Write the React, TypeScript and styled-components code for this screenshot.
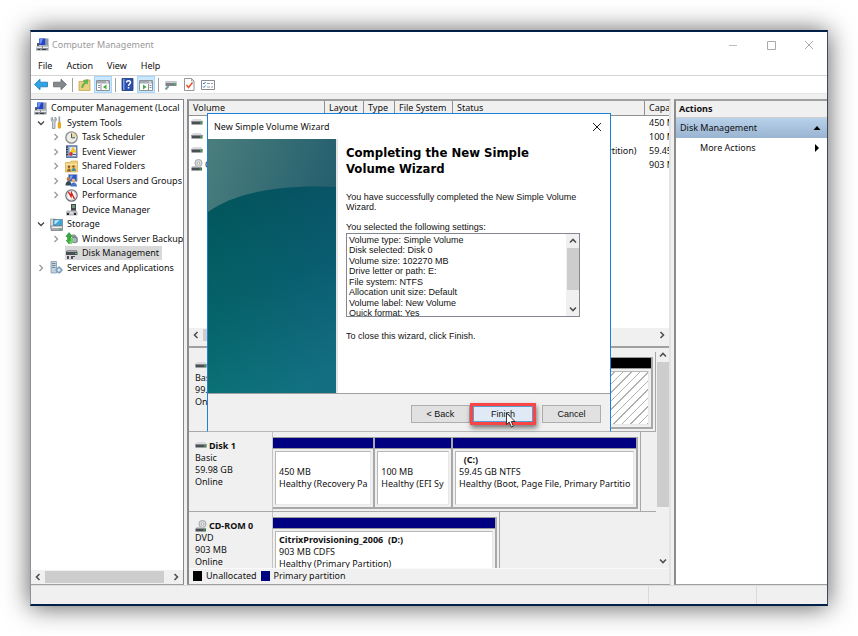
import React from 'react';
import styled, { createGlobalStyle } from 'styled-components';

const ui = '"Noto Sans", "Open Sans", sans-serif';
const classic = '"Liberation Sans", Arial, sans-serif';
const navy = '#000080';

const Global = createGlobalStyle`
  *, *::before, *::after { box-sizing: border-box; }
  body { margin: 0; background: #fff; color: #111; font: 9px/12px ${ui}; }
  button { font: inherit; color: inherit; padding: 0; border: 0; background: none; border-radius: 0; }
  ul { list-style: none; margin: 0; padding: 0; }
  h1, h2, h3, p { margin: 0; font-size: inherit; font-weight: inherit; }
  svg { display: block; flex: none; }
`;

const Page = styled.div`
  min-height: 100vh;
  padding: 30px;
  display: flex;
`;
const Window = styled.div`
  position: relative;
  flex: 1;
  min-width: 0;
  display: flex;
  flex-direction: column;
  background: #f0f0f0;
  border: solid #00204a;
  border-width: 2px 1px 2px 1px;
  border-left-color: #8a929c;
  border-right-color: #3d4a5c;
  box-shadow: 0 1px 24px rgba(0, 0, 0, 0.65);
`;
const TitleBar = styled.header`
  height: 25px;
  display: flex;
  align-items: center;
  gap: 3px;
  padding: 0 1px 0 5px;
  background: #fff;
  color: #999;
`;
const TitleText = styled.h1`flex: 1;`;
const CaptionButton = styled.button`
  width: 35px;
  height: 24px;
  display: grid;
  place-items: center;
`;
const MenuBar = styled.nav`
  height: 18px;
  display: flex;
  align-items: center;
  gap: 14px;
  padding: 0 7px;
  background: #fff;
`;
const Toolbar = styled.div`
  height: 19px;
  display: flex;
  align-items: center;
  gap: 1px;
  padding: 0 1px;
  background: #fff;
  border-top: 1px solid #d4d4d4;
  border-bottom: 1px solid #e6e6e6;
`;
const ToolButton = styled.button<{ $on?: boolean }>`
  width: 18px;
  height: 17px;
  display: grid;
  place-items: center;
  background: ${p => (p.$on ? '#cce8ff' : 'transparent')};
  border: 1px solid ${p => (p.$on ? '#a6d6fb' : 'transparent')};
`;
const ToolRule = styled.span`
  width: 4px;
  height: 14px;
  background: linear-gradient(#a0a0a0, #a0a0a0) center / 1px 100% no-repeat;
`;
const Main = styled.main`
  flex: 1;
  min-height: 0;
  display: grid;
  grid-template-columns: 153px minmax(0, 1fr) 153px;
  gap: 3px;
  padding-top: 5px;
`;
const Pane = styled.section`
  min-width: 0;
  display: flex;
  flex-direction: column;
  background: #fff;
  border-top: 2px solid #a0a0a0;
  border-bottom: 1px solid #a0a0a0;
`;
const TreePane = styled(Pane)`
  border-top: 1px solid #828790;
  border-right: 1px solid #828790;
`;
const MiddlePane = styled(Pane)`
  border-left: 2px solid #8c8c8c;
  border-right: 2px solid #e3e3e3;
`;
const ActionsPane = styled(Pane)`border-left: 2px solid #8c8c8c;`;

const Tree = styled.div`
  flex: 1;
  padding-top: 1px;
  overflow: hidden;
`;
const TreeGroup = styled.ul`
  display: flex;
  flex-direction: column;
  justify-content: space-between;
  height: 174px;
`;
const TreeRow = styled.li<{ $level: number }>`
  height: 14px;
  display: flex;
  align-items: center;
  padding-left: ${p => [3, 4, 19][p.$level]}px;
  white-space: nowrap;
`;
const Twisty = styled.span`
  flex: none;
  width: 15px;
  display: flex;
  justify-content: center;
  padding-right: 4px;
`;
const TreeLabel = styled.span<{ $selected?: boolean }>`
  flex: none;
  height: 14px;
  display: flex;
  align-items: center;
  gap: 4px;
  padding-right: 3px;
  background: ${p => (p.$selected ? '#d9d9d9' : 'transparent')};
`;

const HBar = styled.div`
  height: 14px;
  display: flex;
  align-items: center;
  background: #f0f0f0;
`;
const VBar = styled.div`
  width: 13px;
  display: flex;
  flex-direction: column;
  align-items: center;
  background: #f0f0f0;
`;
const ScrollButton = styled.button`
  width: 14px;
  height: 14px;
  flex: none;
  display: grid;
  place-items: center;
`;
const HThumb = styled.div<{ $end: number }>`
  flex: 1;
  height: 12px;
  margin-right: ${p => p.$end}px;
  background: #cdcdcd;
`;
const VThumb = styled.div<{ $share: number }>`
  width: 12px;
  height: ${p => p.$share}%;
  background: #cdcdcd;
`;
const VSpace = styled.div`flex: 1;`;

const VolumeList = styled.div`
  height: 247px;
  display: flex;
  flex-direction: column;
  border-bottom: 2px solid #a0a0a0;
  background: #f0f0f0;
  padding-bottom: 4px;
`;
const TableArea = styled.div`
  flex: 1;
  overflow: hidden;
  background: #fff;
`;
const Volumes = styled.table`
  table-layout: fixed;
  width: 100%;
  border-collapse: separate;
  border-spacing: 0;
  white-space: nowrap;
  th {
    height: 15px;
    padding: 0 0 0 4px;
    text-align: left;
    font-weight: 400;
    background: #f0f0f0;
    border-right: 1px solid #909090;
    border-bottom: 1px solid #909090;
    overflow: hidden;
  }
  th:last-child { border-right: 0; }
  td {
    height: 14px;
    padding: 0 0 0 4px;
    overflow: hidden;
  }
`;
const Col = styled.col<{ $w?: number }>`width: ${p => (p.$w ? `${p.$w}px` : 'auto')};`;
const VolumeName = styled.span`
  display: flex;
  align-items: center;
  gap: 2px;
  margin-left: -2px;
`;

const DiskView = styled.div`
  flex: 1;
  min-height: 0;
  display: flex;
  background: #f0f0f0;
`;
const DiskRows = styled.div`
  flex: 1;
  min-width: 0;
  height: 220px;
  padding-top: 4px;
  overflow: hidden;
`;
const DiskRow = styled.div`
  height: 80px;
  display: grid;
  grid-template-columns: 84px minmax(0, 1fr);
  border-bottom: 1px solid #a8a8a8;
`;
const DiskInfo = styled.div`
  padding: 8px 0 0 6px;
  border-right: 1px solid #c4c4c4;
`;
const DiskName = styled.h3`
  height: 12px;
  display: flex;
  align-items: center;
  gap: 2px;
  font-weight: 700;
`;
const Graphic = styled.div<{ $end: number }>`
  height: 79px;
  margin-right: ${p => p.$end}px;
  padding: 5px 2px 2px 0;
  display: flex;
  border-right: 1px solid #a8a8a8;
`;
const Volume = styled.div<{ $grow: number }>`
  flex: ${p => p.$grow} 1 0;
  min-width: 0;
  display: flex;
  flex-direction: column;
  background: #f0f0f0;
  border-right: 2px solid #a8a8a8;
  border-bottom: 2px solid #a8a8a8;
`;
const VolumeBar = styled.div<{ $color: string }>`
  height: 12px;
  background: ${p => p.$color};
  border: 1px solid #9a9a9a;
  border-width: 1px 0;
`;
const VolumeBox = styled.div<{ $hatched?: boolean }>`
  flex: 1;
  margin: 2px 2px 2px 2px;
  padding: 2px 3px;
  overflow: hidden;
  white-space: pre;
  border: 1px solid #b8b8b8;
  border-right-color: #e8e8e8;
  border-bottom-color: #e8e8e8;
  background: ${p => (p.$hatched
    ? 'repeating-linear-gradient(135deg, #fff 0 5px, #b0b0b0 5px 6px)'
    : '#fff')};
`;
const VolumeLine = styled.p<{ $bold?: boolean }>`
  height: 12px;
  font-weight: ${p => (p.$bold ? 700 : 400)};
`;
const Legend = styled.div`
  height: 16px;
  display: flex;
  align-items: center;
  gap: 4px;
  padding: 0 0 2px 4px;
  background: #f0f0f0;
  border-top: 1px solid #fafafa;
`;
const Swatch = styled.span<{ $color: string }>`
  width: 9px;
  height: 10px;
  background: ${p => p.$color};
`;

const ActionsTitle = styled.h2`
  height: 17px;
  padding: 2px 3px;
  font-weight: 700;
  background: #f0f0f0;
  border-bottom: 1px solid #d0d0d0;
`;
const ActionRow = styled.button<{ $heading?: boolean }>`
  width: 100%;
  height: 20px;
  display: flex;
  align-items: center;
  justify-content: space-between;
  padding: 0 6px 0 ${p => (p.$heading ? 4 : 24)}px;
  background: ${p => (p.$heading ? 'linear-gradient(#b9d1ea, #99b4d1)' : 'transparent')};
`;

const StatusBar = styled.footer`
  height: 19px;
  display: grid;
  grid-template-columns: minmax(0, 1fr) 108px 70px;
  border-top: 1px solid #dcdcdc;
`;
const StatusCell = styled.span`border-right: 1px solid #dadada;`;

const Dialog = styled.div`
  position: absolute;
  left: 176px;
  top: 81px;
  width: 404px;
  background: #fff;
  border: 1px solid #1a82d8;
  border-bottom-color: #b8b8b8;
`;
const DialogTitle = styled.header`
  height: 25px;
  display: flex;
  align-items: center;
  justify-content: space-between;
  padding: 0 2px 0 6px;
`;
const CloseButton = styled.button`
  width: 22px;
  height: 22px;
  display: grid;
  place-items: center;
`;
const DialogBody = styled.div`
  display: grid;
  grid-template-columns: 128px minmax(0, 1fr);
  height: 255px;
  border-bottom: 1px solid #a0a0a0;
`;
const Banner = styled.svg`
  width: 100%;
  height: 254px;
`;
const Copy = styled.div`
  padding: 6px 24px 0 8px;
  font: 9px/10px ${classic};
  border-left: 2px solid #e4e4e4;
`;
const Heading = styled.h2`
  width: 200px;
  font: 700 13px/16px "DejaVu Sans Condensed", "DejaVu Sans", Verdana, sans-serif;
  color: #000;
  margin-bottom: 15px;
`;
const Para = styled.p<{ $after: number }>`margin-bottom: ${p => p.$after}px;`;
const SettingsBox = styled.div`
  height: 84px;
  width: 234px;
  display: flex;
  overflow: hidden;
  border: 1px solid #828790;
  margin-bottom: 14px;
`;
const Settings = styled.ul`
  flex: 1;
  height: 84px;
  padding: 1px 2px 0;
  display: flex;
  flex-direction: column;
  justify-content: space-between;
`;
const DialogFooter = styled.footer`
  height: 37px;
  display: flex;
  justify-content: flex-end;
  align-items: center;
  padding: 2px 9px 0 0;
  background: #f0f0f0;
  font: 9px/12px ${classic};
`;
const PushButton = styled.button<{ $primary?: boolean }>`
  width: 59px;
  height: 18px;
  border: 1px solid ${p => (p.$primary ? '#5a9bd0' : '#adadad')};
  background: ${p => (p.$primary ? '#e0eaf6' : '#e1e1e1')};
  font: inherit;
`;
const Highlight = styled.span`
  position: relative;
  display: grid;
  margin-right: 6px;
  border: 3px solid #f94545;
  box-shadow: 1px 3px 5px rgba(0, 0, 0, 0.5);
  ${PushButton} { width: 60px; height: 16px; }
`;
const Pointer = styled.svg`
  position: absolute;
  left: 32px;
  top: 6px;
`;

type Kind = 'up' | 'down' | 'left' | 'right';
const chevrons: Record<Kind, string> = {
  up: 'M1 5.5 4 2.5 7 5.5', down: 'M1 2.5 4 5.5 7 2.5', left: 'M5.5 1 2.5 4 5.5 7', right: 'M2.5 1 5.5 4 2.5 7',
};
const Chevron = ({ kind, color = '#505050', width = 1.6 }: { kind: Kind; color?: string; width?: number }) => (
  <svg width="8" height="8" viewBox="0 0 8 8" fill="none" stroke={color} strokeWidth={width} aria-hidden="true">
    <path d={chevrons[kind]} />
  </svg>
);

const Icon = ({ children, w = 13, h = 13 }: { children: React.ReactNode; w?: number; h?: number }) => (
  <svg width={w} height={h} viewBox={`0 0 ${w} ${h}`} aria-hidden="true">{children}</svg>
);
const ComputerIcon = () => (
  <Icon>
    <path d="M4 0h8l1 1v7H5z" fill="#c9ced6" />
    <path d="M3 .5h6.500v6.500H3z" fill="#2545c4" /><path d="M3.500 1h3.500l-2 4.500H3.500z" fill="#6f93f2" />
    <path d="M10 1h2v6h-2z" fill="#8f98a3" />
    <path d="M1 7.500h11.500v5H0z" fill="#8b9198" /><path d="M1 8.500h5v1.500H1zM7 8.500h5v1.500H7z" fill="#e8ecef" />
    <path d="M2 11h2v1H2zM6 11h4v1H6z" fill="#343a40" /><path d="M1 5h2v3H1z" fill="#555c63" />
  </Icon>
);
const ToolsIcon = () => (
  <Icon>
    <path d="M2.500 1 1 2.500l.5 2.500 1 1v6.500h2.500V6l1-1 .5-2.500L5 1v3H2.500z" fill="#d0d4d8" stroke="#7b8288" strokeWidth=".7" />
    <path d="M8.500.5h1.700v6H8.500z" fill="#9a9fa4" /><rect x="7.800" y="6" width="3.200" height="6.500" rx="1" fill="#e8a71d" />
  </Icon>
);
const ClockIcon = () => (
  <Icon>
    <circle cx="6.500" cy="6.500" r="5.700" fill="#f0ede4" stroke="#85898e" strokeWidth="1.300" />
    <path d="M6.500 6.500V1.500a5 5 0 0 1 5 5z" fill="#ecd9a0" /><path d="M6.500 2.500v4.300H10" fill="none" stroke="#3d5878" />
  </Icon>
);
const EventIcon = () => (
  <Icon>
    <rect x="1.500" y=".8" width="10.500" height="11.600" fill="#7e9cc8" stroke="#455f8e" strokeWidth=".8" />
    <path d="M1 2h2M1 4.500h2M1 7h2M1 9.500h2" stroke="#333" /><path d="M4.500 2h6.500v9H4.500z" fill="#dce6f4" />
    <path d="m8 1.500 3.500 6H5z" fill="#f5c518" /><circle cx="6" cy="9" r="1.900" fill="#d2342b" /><path d="M8 9.500h3" stroke="#35598f" />
  </Icon>
);
const FolderIcon = () => (
  <Icon>
    <path d="M.5 2.500h4.500l1-1.500h6.500v11H.500z" fill="#f0cf74" stroke="#c9a44a" strokeWidth=".6" /><path d="M1 4h11v1H1z" fill="#fae7a8" />
    <circle cx="4" cy="6.800" r="1.200" fill="#84552a" /><circle cx="8.500" cy="6.500" r="1.200" fill="#84552a" />
    <path d="M2 11.500c0-4 4-4 4 0z" fill="#8d6a30" /><path d="M6.500 11c0-4 4.500-4 4.500 0z" fill="#4a8d96" />
  </Icon>
);
const UsersIcon = () => (
  <Icon>
    <path d="M3.500.5h8.500v7H3.500z" fill="#2d56c8" stroke="#9ca6b8" /><path d="M5 1.500h3l-2 4H5z" fill="#7ea0f1" />
    <circle cx="3.500" cy="5" r="1.900" fill="#b97b45" /><path d="M.5 11.500c0-6 6-6 6 0z" fill="#33475c" />
    <circle cx="8.500" cy="6.500" r="1.900" fill="#e2b27e" /><path d="M5.500 12.500c0-5.500 6.500-5.500 6.500 0z" fill="#3f78c4" />
  </Icon>
);
const PerfIcon = () => (
  <Icon>
    <circle cx="6.500" cy="6.500" r="5.700" fill="#fff" stroke="#6e7378" strokeWidth="1.200" />
    <circle cx="6.500" cy="6.500" r="4.300" fill="none" stroke="#b8bcc0" strokeWidth=".6" />
    <path d="m3.500 3 2.500 4.500.5-3.500 3 6" fill="none" stroke="#d9201c" strokeWidth="1.500" />
  </Icon>
);
const DeviceIcon = () => (
  <Icon>
    <path d="M6 1h5v7H6z" fill="#44494e" /><path d="M7 2h3v3H7z" fill="#6f9b75" />
    <path d="M2 7.500h9.500L12.500 9v3.500H1V9z" fill="#b4b8bc" /><path d="M2 10h2v2H2zM9 10h2v2H9z" fill="#25282b" /><path d="M5 9.500h3v1H5z" fill="#fff" />
  </Icon>
);
const StorageIcon = () => (
  <Icon>
    <path d="M.5 1h5v9h-5z" fill="#d4d8dc" stroke="#878d93" strokeWidth=".6" /><path d="M3.500 1.500h9v6h-9z" fill="#3ba6dc" stroke="#677785" strokeWidth=".7" />
    <path d="m4.500 2.500 5-.5-4 4h-1z" fill="#c2e7f8" /><path d="M1 8h11.500v4.500H1z" fill="#a4aab0" stroke="#62686e" strokeWidth=".6" />
    <path d="M1.500 8.500h10.500v1.500H1.500z" fill="#eef0f2" /><path d="M9 10.500h2.500v1H9z" fill="#29b34a" />
  </Icon>
);
const BackupIcon = () => (
  <Icon>
    <path d="M7 2.500h3l2.500 3v5H8z" fill="#8b959e" /><circle cx="9.500" cy="8" r="2.800" fill="#aab5be" stroke="#5a646d" strokeWidth=".7" />
    <path d="M4 .5.8 4.500h1.700v5L1 8l3 4 2-2.500V4.500h1.500z" fill="#37a93c" stroke="#217d2d" strokeWidth=".5" />
    <path d="M6 12.500 3.500 9h2V6H8v3h1z" fill="#70cf5f" />
  </Icon>
);
const DiskMgmtIcon = () => (
  <Icon>
    <path d="M2 3.500h9.500l1 1.500v3H1V5z" fill="#4a4f54" /><path d="M2 4h9.500v1H2z" fill="#a5aaaf" /><path d="M10 6h2v1h-2z" fill="#39d353" />
    <path d="M2 9h2v3H2zM6 9h4v1H6zM6 10h2v2H6z" fill="#4b5056" />
  </Icon>
);
const ServicesIcon = () => (
  <Icon>
    <path d="M1 .5h5.500v11.500H1z" fill="#c4d2de" stroke="#7c8a98" strokeWidth=".7" /><path d="M2 2.500h3.500M2 4.500h3.500M2 6.500h3.500" stroke="#6c87a0" />
    <circle cx="9" cy="9" r="2.300" fill="#e6eff7" stroke="#7ba3c6" strokeWidth="1.600" /><path d="M9 5v1.500M9 11.500V13M5 9h1.500M11.500 9H13" stroke="#7ba3c6" />
  </Icon>
);
const DriveIcon = () => (
  <Icon w={12} h={12}>
    <path d="M2 2h8l1.500 2H.5z" fill="#d8dadd" /><path d="M.5 4h11v3.500H.500z" fill="#4b4f53" /><path d="M.5 4h11v1H.500z" fill="#888c90" /><path d="M9 5.500h2v1H9z" fill="#2fdc4c" />
  </Icon>
);
const CdIcon = () => (
  <Icon w={12} h={12}>
    <circle cx="7.500" cy="4" r="3.600" fill="#d8dadc" stroke="#8b8f93" strokeWidth=".7" /><circle cx="7.500" cy="4" r="1.200" fill="#fff" stroke="#8b8f93" strokeWidth=".6" />
    <path d="M1.500 7h8l1.500 1.500H.5z" fill="#c5c8cb" /><path d="M.5 8.500h10.500v3H.5z" fill="#4a4e52" /><path d="M8.500 9.500h2v1h-2z" fill="#2fdc4c" />
  </Icon>
);
const ArrowIcon = ({ color, edge, flip }: { color: string; edge: string; flip?: boolean }) => (
  <Icon w={14} h={13}>
    <path d={flip ? 'M13.500 6.500 8 1.200v3H.5v4.600H8v3z' : 'M.5 6.500 6 1.200v3h7.500v4.600H6v3z'} fill={color} stroke={edge} strokeWidth=".8" />
  </Icon>
);
const PanelIcon = ({ left }: { left?: boolean }) => (
  <Icon w={14} h={12}>
    <path d="M.5 1.500h13v10H.5z" fill="#fdfdfd" stroke="#8c9298" /><path d="M1 2h12v2.500H1z" fill="#a5abb2" /><path d="M10 3h2" stroke="#fff" />
    <path d={left ? 'M5 5v6' : 'M9.500 5v6'} stroke="#8c9298" /><path d={left ? 'M2 6.500h2M2 8.500h2' : 'M10.500 6.500h2M10.500 8.500h2'} stroke="#8c9298" />
    <path d={left ? 'M10.500 5.500v5L7 8z' : 'M4 5.500v5L7.500 8z'} fill="#43aa3b" />
  </Icon>
);
const FolderUpIcon = () => (
  <Icon>
    <path d="M1 3.500h4l1-1.500h6v10.500H1z" fill="#ecd081" stroke="#bd9c42" strokeWidth=".7" />
    <path d="M3.500 9.500C4 6.500 5 5.500 6.500 4.500L5.200 3l4.800-1.500L9.500 6 8.200 5.200C6.500 6 5.500 7 5 9.500z" fill="#5fbb52" stroke="#3f9a3c" strokeWidth=".4" />
  </Icon>
);
const HelpIcon = () => (
  <Icon>
    <path d="M1 .5h11v12H1z" fill="#2c50ad" stroke="#1c3578" strokeWidth=".8" /><path d="M2 1h1.500v11H2z" fill="#7d9be0" />
    <path d="M5.500 4.500c0-2.500 4-2.500 4 0 0 1.500-2 1.500-2 3.500M7.500 9v1.600" fill="none" stroke="#fff" strokeWidth="1.500" />
  </Icon>
);
const ConnectIcon = () => (
  <Icon>
    <path d="M1.500 3.500h11v4.500h-11z" fill="#7c8186" /><path d="M1.500 3.500h11v1.500h-11z" fill="#c9cccf" /><path d="M10 6h2v1h-2z" fill="#35c84c" />
    <path d="M4.500 8 1.500 11.500" stroke="#7c9f96" strokeWidth="2" />
  </Icon>
);
const CheckPageIcon = () => (
  <Icon w={12}>
    <path d="M1.500.5h7L11 3v9.500H1.500z" fill="#fff" stroke="#858a8f" strokeWidth=".9" /><path d="M8.500.5V3H11" fill="none" stroke="#858a8f" strokeWidth=".7" />
    <path d="m3.500 7 2 2.500 4-5" fill="none" stroke="#e2592c" strokeWidth="1.500" />
  </Icon>
);
const ListIcon = () => (
  <Icon w={14} h={12}>
    <path d="M.5 1.500h13v9H.5z" fill="#fff" stroke="#878c92" /><path d="m2 4 1 1 1.500-2M2 7.500l1 1 1.500-2" fill="none" stroke="#3d7fd0" />
    <path d="M6 4.500h3M10 4.500h2M6 8h3M10 8h2" stroke="#969ba1" />
  </Icon>
);
const CloseIcon = ({ color }: { color: string }) => (
  <Icon w={10} h={10}><path d="m1 1 8 8M9 1 1 9" stroke={color} /></Icon>
);

type Node = { label: string; level: number; icon: React.ReactNode; open?: boolean; leaf?: boolean; selected?: boolean };
const nodes: Node[] = [
  { label: 'Computer Management (Local', level: 0, icon: <ComputerIcon />, leaf: true },
  { label: 'System Tools', level: 1, icon: <ToolsIcon />, open: true },
  { label: 'Task Scheduler', level: 2, icon: <ClockIcon /> },
  { label: 'Event Viewer', level: 2, icon: <EventIcon /> },
  { label: 'Shared Folders', level: 2, icon: <FolderIcon /> },
  { label: 'Local Users and Groups', level: 2, icon: <UsersIcon /> },
  { label: 'Performance', level: 2, icon: <PerfIcon /> },
  { label: 'Device Manager', level: 2, icon: <DeviceIcon />, leaf: true },
  { label: 'Storage', level: 1, icon: <StorageIcon />, open: true },
  { label: 'Windows Server Backup', level: 2, icon: <BackupIcon /> },
  { label: 'Disk Management', level: 2, icon: <DiskMgmtIcon />, leaf: true, selected: true },
  { label: 'Services and Applications', level: 1, icon: <ServicesIcon /> },
];
const volumes = [
  { name: '', status: '', size: '450 MB' },
  { name: '', status: '', size: '100 MB' },
  { name: '', status: 'Healthy (Boot, Page File, Primary Partition)', size: '59.45 GB' },
  { name: 'CitrixProvisioning', status: '', size: '903 MB', cd: true },
];
type Part = { grow: number; color: string; lines: string[]; hatched?: boolean };
const disks: { name: string; info: string[]; end: number; cd?: boolean; parts: Part[] }[] = [
  { name: 'Disk 0', info: ['Basic', '99.88 GB', 'Online'], end: 0, parts: [{ grow: 1, color: '#000', lines: [], hatched: true }] },
  { name: 'Disk 1', info: ['Basic', '59.98 GB', 'Online'], end: 15, parts: [
    { grow: 102, color: navy, lines: ['', '450 MB', 'Healthy (Recovery Pa'] },
    { grow: 77, color: navy, lines: ['', '100 MB', 'Healthy (EFI Sy'] },
    { grow: 186, color: navy, lines: ['  (C:)', '59.45 GB NTFS', 'Healthy (Boot, Page File, Primary Partitio'] },
  ] },
  { name: 'CD-ROM 0', info: ['DVD', '903 MB', 'Online'], end: 156, cd: true, parts: [
    { grow: 1, color: navy, lines: ['CitrixProvisioning_2006  (D:)', '903 MB CDFS', 'Healthy (Primary Partition)'] },
  ] },
];
const settings = [
  'Volume type: Simple Volume', 'Disk selected: Disk 0', 'Volume size: 102270 MB', 'Drive letter or path: E:',
  'File system: NTFS', 'Allocation unit size: Default', 'Volume label: New Volume', 'Quick format: Yes',
];

const ComputerTree = () => (
  <TreePane aria-label="Console tree">
    <Tree>
      <TreeGroup>
        {nodes.map(n => (
          <TreeRow key={n.label} $level={n.level}>
            {n.level > 0 && (
              <Twisty>{!n.leaf && <Chevron kind={n.open ? 'down' : 'right'} color={n.open ? '#444' : '#999'} width={1.3} />}</Twisty>
            )}
            <TreeLabel $selected={n.selected}>{n.icon}{n.label}</TreeLabel>
          </TreeRow>
        ))}
      </TreeGroup>
    </Tree>
    <HBar>
      <ScrollButton aria-label="Scroll left"><Chevron kind="left" /></ScrollButton>
      <HThumb $end={5} />
      <ScrollButton aria-label="Scroll right"><Chevron kind="right" /></ScrollButton>
    </HBar>
  </TreePane>
);

const VolumeTable = () => (
  <VolumeList>
    <TableArea>
      <Volumes>
        <colgroup><Col $w={136} /><Col $w={39} /><Col $w={31} /><Col $w={58} /><Col /><Col $w={24} /></colgroup>
        <thead>
          <tr><th>Volume</th><th>Layout</th><th>Type</th><th>File System</th><th>Status</th><th>Capacity</th></tr>
        </thead>
        <tbody>
          {volumes.map(v => (
            <tr key={v.size}>
              <td><VolumeName>{v.cd ? <CdIcon /> : <DriveIcon />}{v.name}</VolumeName></td>
              <td /><td /><td /><td>{v.status}</td><td>{v.size}</td>
            </tr>
          ))}
        </tbody>
      </Volumes>
    </TableArea>
    <HBar>
      <ScrollButton aria-label="Scroll left"><Chevron kind="left" /></ScrollButton>
      <HThumb $end={60} />
      <ScrollButton aria-label="Scroll right"><Chevron kind="right" /></ScrollButton>
    </HBar>
  </VolumeList>
);

const Disks = () => (
  <DiskView>
    <DiskRows>
      {disks.map(d => (
        <DiskRow key={d.name}>
          <DiskInfo>
            <DiskName>{d.cd ? <CdIcon /> : <DriveIcon />}{d.name}</DiskName>
            {d.info.map(t => <p key={t}>{t}</p>)}
          </DiskInfo>
          <Graphic $end={d.end}>
            {d.parts.map((p, i) => (
              <Volume key={i} $grow={p.grow}>
                <VolumeBar $color={p.color} />
                <VolumeBox $hatched={p.hatched}>
                  {p.lines.map((t, j) => <VolumeLine key={j} $bold={j === 0}>{t}</VolumeLine>)}
                </VolumeBox>
              </Volume>
            ))}
          </Graphic>
        </DiskRow>
      ))}
    </DiskRows>
    <VBar>
      <ScrollButton aria-label="Scroll up"><Chevron kind="up" /></ScrollButton>
      <VThumb $share={66} />
      <VSpace />
      <ScrollButton aria-label="Scroll down"><Chevron kind="down" /></ScrollButton>
    </VBar>
  </DiskView>
);

const Wizard = () => (
  <Dialog role="dialog" aria-labelledby="wizard-title">
    <DialogTitle>
      <span id="wizard-title">New Simple Volume Wizard</span>
      <CloseButton aria-label="Close wizard"><CloseIcon color="#222" /></CloseButton>
    </DialogTitle>
    <DialogBody>
      <Banner viewBox="0 0 128 254" preserveAspectRatio="none" aria-hidden="true">
        <defs>
          <linearGradient id="sky" x1="0" y1="0" x2="1" y2=".6">
            <stop offset="0" stopColor="#4a7f7d" /><stop offset="1" stopColor="#1c566a" />
          </linearGradient>
          <linearGradient id="hill" x1=".3" y1="0" x2=".6" y2="1">
            <stop offset="0" stopColor="#004a55" /><stop offset=".5" stopColor="#045c68" /><stop offset="1" stopColor="#107480" />
          </linearGradient>
          <linearGradient id="tint" x1="0" y1="0" x2="1" y2="0">
            <stop offset="0" stopColor="#087b70" stopOpacity=".25" /><stop offset="1" stopColor="#1c5c86" stopOpacity=".25" />
          </linearGradient>
        </defs>
        <path d="M0 0h128v254H0z" fill="url(#sky)" />
        <path d="M0 73C28 53 75 45 128 48v206H0z" fill="url(#hill)" />
        <path d="M0 73C28 53 75 45 128 48v206H0z" fill="url(#tint)" />
      </Banner>
      <Copy>
        <Heading>Completing the New Simple Volume Wizard</Heading>
        <Para $after={10}>You have successfully completed the New Simple Volume<br />Wizard.</Para>
        <Para $after={1} id="settings-label">You selected the following settings:</Para>
        <SettingsBox>
          <Settings aria-labelledby="settings-label">
            {settings.map(s => <li key={s}>{s}</li>)}
          </Settings>
          <VBar>
            <ScrollButton aria-label="Scroll settings up"><Chevron kind="up" /></ScrollButton>
            <VThumb $share={51} />
            <VSpace />
            <ScrollButton aria-label="Scroll settings down"><Chevron kind="down" /></ScrollButton>
          </VBar>
        </SettingsBox>
        <p>To close this wizard, click Finish.</p>
      </Copy>
    </DialogBody>
    <DialogFooter>
      <PushButton>&lt; Back</PushButton>
      <Highlight>
        <PushButton $primary>Finish</PushButton>
        <Pointer width="14" height="17" viewBox="0 0 14 17" aria-hidden="true">
          <path d="M1.500 1v11.500l2.700-2.400 2.200 5 2-1-2.100-4.600h3.700z" fill="#fff" stroke="#222" strokeWidth=".9" />
        </Pointer>
      </Highlight>
      <PushButton>Cancel</PushButton>
    </DialogFooter>
  </Dialog>
);

export default function App() {
  return (
    <Page>
      <Global />
      <Window>
        <TitleBar>
          <ComputerIcon />
          <TitleText>Computer Management</TitleText>
          <CaptionButton aria-label="Minimize"><Icon w={10} h={10}><path d="M1 5.500h8" stroke="#bbb" /></Icon></CaptionButton>
          <CaptionButton aria-label="Maximize"><Icon w={10} h={10}><path d="M1.500 1.500h8v8h-8z" fill="none" stroke="#aaa" /></Icon></CaptionButton>
          <CaptionButton aria-label="Close"><CloseIcon color="#aaa" /></CaptionButton>
        </TitleBar>
        <MenuBar>
          {['File', 'Action', 'View', 'Help'].map(m => <button key={m}>{m}</button>)}
        </MenuBar>
        <Toolbar>
          <ToolButton aria-label="Back"><ArrowIcon color="#2fa4e4" edge="#1b78b5" /></ToolButton>
          <ToolButton aria-label="Forward"><ArrowIcon color="#85898c" edge="#66696c" flip /></ToolButton>
          <ToolRule />
          <ToolButton aria-label="Up one level"><FolderUpIcon /></ToolButton>
          <ToolButton $on aria-label="Show console tree"><PanelIcon left /></ToolButton>
          <ToolRule />
          <ToolButton aria-label="Help topics"><HelpIcon /></ToolButton>
          <ToolButton $on aria-label="Show action pane"><PanelIcon /></ToolButton>
          <ToolRule />
          <ToolButton aria-label="Rescan disks"><ConnectIcon /></ToolButton>
          <ToolButton aria-label="Properties"><CheckPageIcon /></ToolButton>
          <ToolButton aria-label="Settings"><ListIcon /></ToolButton>
        </Toolbar>
        <Main>
          <ComputerTree />
          <MiddlePane aria-label="Disk management">
            <VolumeTable />
            <Disks />
            <Legend>
              <Swatch $color="#000" />Unallocated
              <Swatch $color={navy} />Primary partition
            </Legend>
          </MiddlePane>
          <ActionsPane aria-label="Actions">
            <ActionsTitle>Actions</ActionsTitle>
            <ActionRow $heading>Disk Management<Icon w={8} h={8}><path d="M4 2 7.500 6h-7z" /></Icon></ActionRow>
            <ActionRow>More Actions<Icon w={8} h={8}><path d="M2 0 6 4 2 8z" /></Icon></ActionRow>
          </ActionsPane>
        </Main>
        <StatusBar><StatusCell /><StatusCell /><span /></StatusBar>
        <Wizard />
      </Window>
    </Page>
  );
}
